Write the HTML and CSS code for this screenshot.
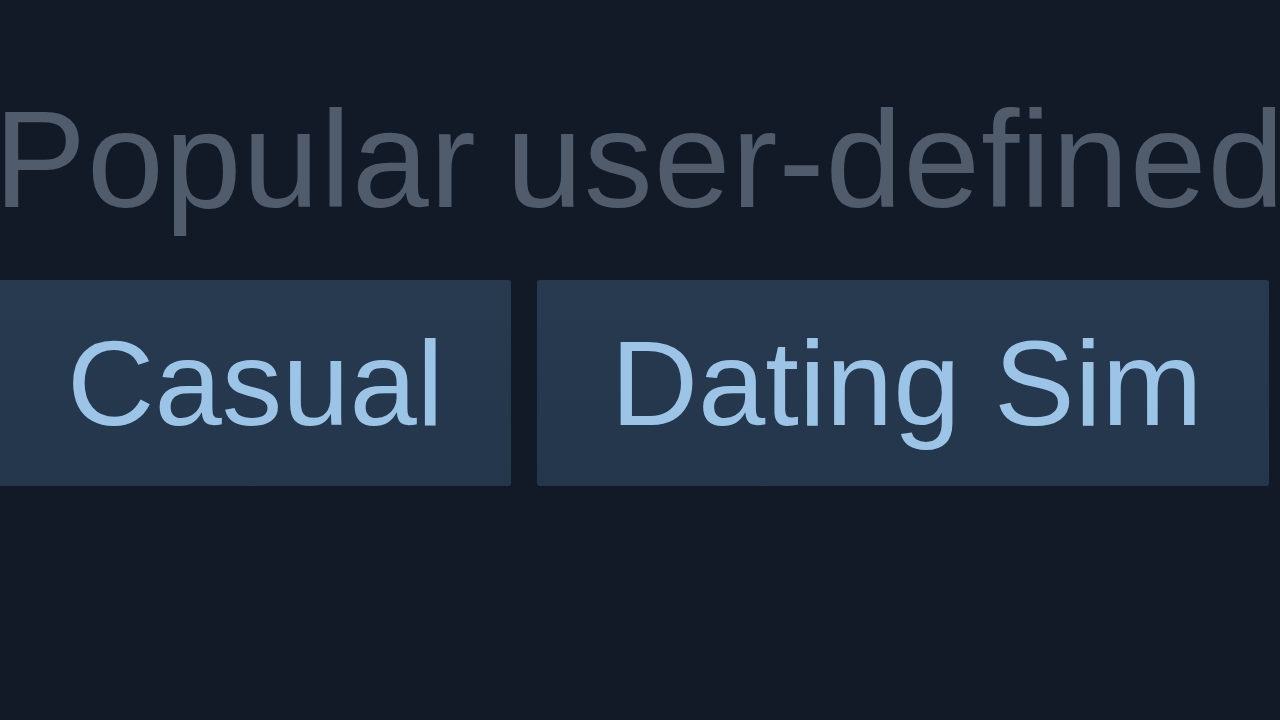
FILE: index.html
```html
<!DOCTYPE html>
<html lang="en">
<head>
<meta charset="utf-8">
<title>Popular user-defined tags</title>
<link rel="stylesheet" href="styles.css">
</head>
<body>
  <section class="tags-block">
    <div class="tags-heading">Popular user-defined tags for this product:</div>
    <div class="tags-row">
      <a class="app-tag" href="#">Casual</a>
      <a class="app-tag" href="#">Dating Sim</a>
      <a class="app-tag" href="#">Anime</a>
      <a class="app-tag" href="#">Visual Novel</a>
    </div>
  </section>
</body>
</html>
```
FILE: styles.css
```css
html, body {
  margin: 0;
  padding: 0;
  width: 1280px;
  height: 720px;
  overflow: hidden;
  background: #131a27;
}

.tags-block {
  padding-top: 89px;
  margin-left: -6px;
  font-family: "Liberation Sans", Arial, sans-serif;
}

.tags-heading {
  font-size: 138px;
  line-height: 140px;
  letter-spacing: 1px;
  word-spacing: -10px;
  color: #505c6c;
  white-space: nowrap;
}

.tags-row {
  display: flex;
  flex-wrap: nowrap;
  gap: 26px;
  margin-top: 51px;
  margin-left: -1px;
}

.app-tag {
  flex: none;
  display: block;
  height: 206px;
  line-height: 206px;
  padding: 0 67px 0 74px;
  font-size: 121px;
  color: #9cc4e6;
  background: linear-gradient(to bottom, #273a50 0%, #23364a 100%);
  text-decoration: none;
  white-space: nowrap;
  border-radius: 3px;
}
```
